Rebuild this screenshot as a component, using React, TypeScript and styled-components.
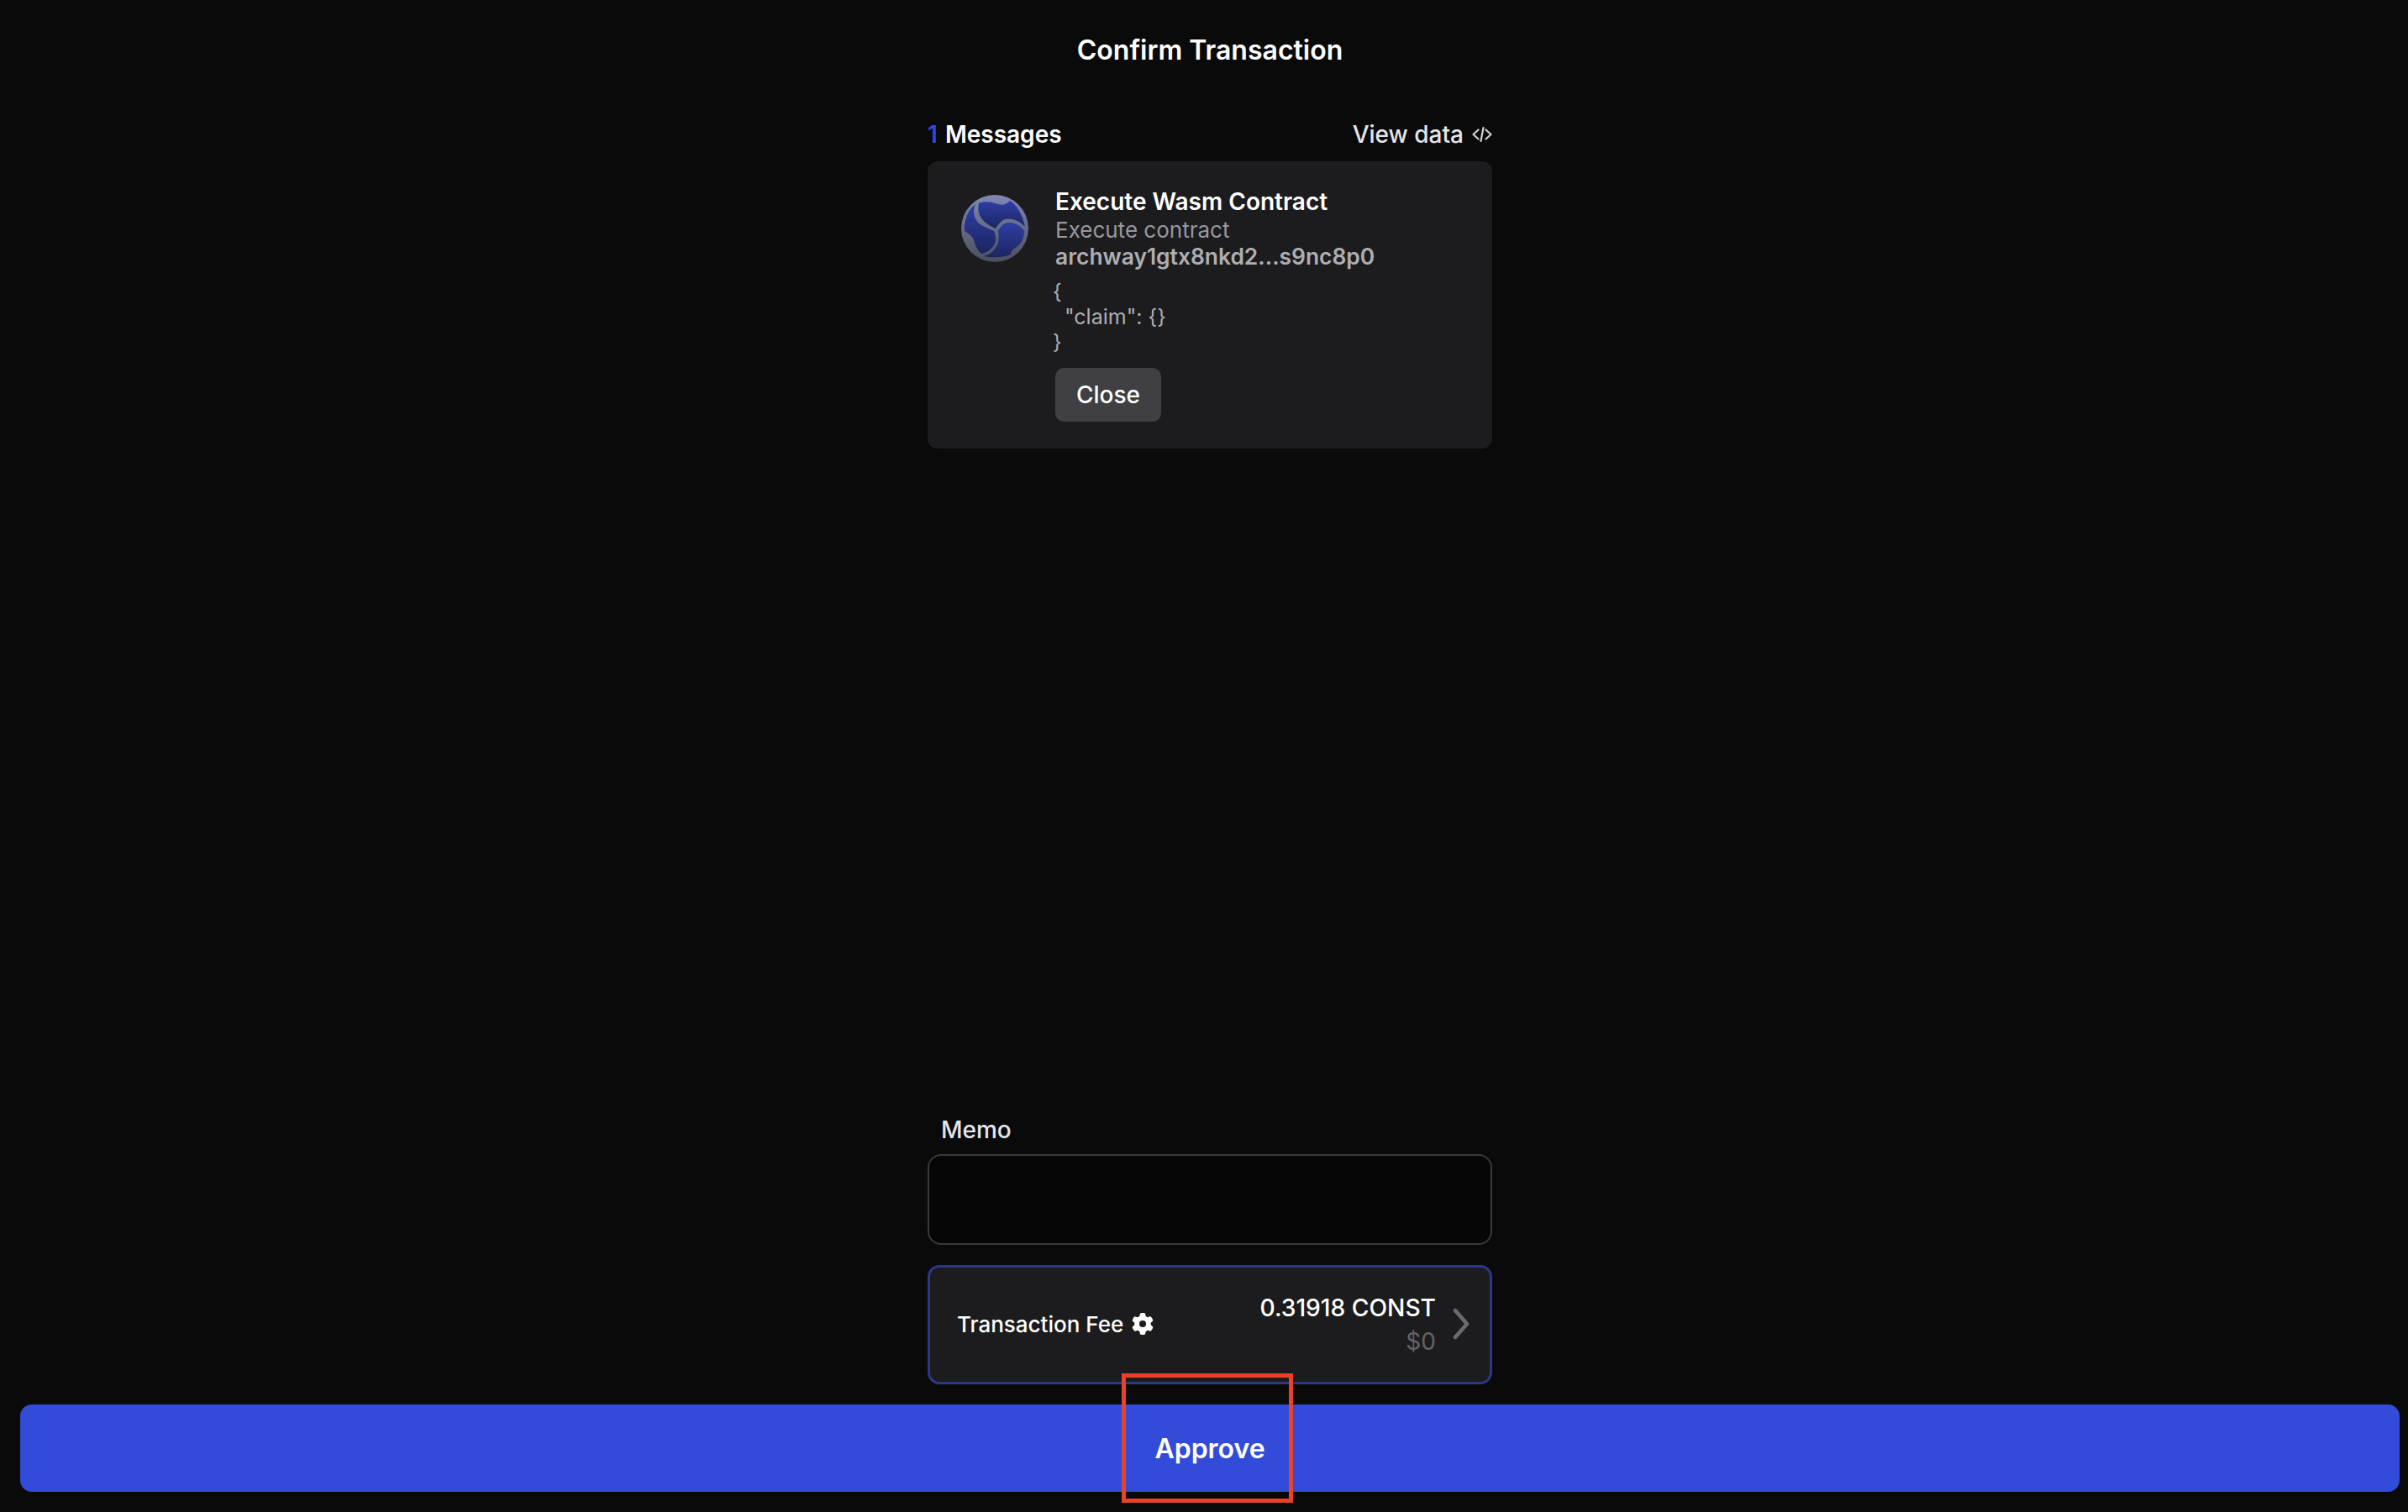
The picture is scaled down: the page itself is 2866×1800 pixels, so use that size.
import styled, { createGlobalStyle } from 'styled-components'
import { FaGear } from 'react-icons/fa6'

const GlobalStyle = createGlobalStyle`
  html, body {
    margin: 0;
    padding: 0;
    background: #0a0a0b;
    font-family: Inter, "Liberation Sans", sans-serif;
  }
`

export default function App() {
  return (
    <Page>
      <GlobalStyle />
      <Title>Confirm Transaction</Title>
      <Column>
        <MessagesHeader>
          <MessagesCount>
            <Count>1</Count> Messages
          </MessagesCount>
          <ViewData>
            View data
            <svg width="24" height="20" viewBox="0 0 24 20" fill="none" stroke="#d1d1d6" strokeWidth="2.2" strokeLinecap="round" strokeLinejoin="round">
              <path d="M7.5 4.5 1.5 10l6 5.5" />
              <path d="M13.5 2 10.5 18" />
              <path d="M16.5 4.5 22.5 10l-6 5.5" />
            </svg>
          </ViewData>
        </MessagesHeader>
        <MessageCard>
          <WasmLogo />
          <MessageBody>
            <MessageTitle>Execute Wasm Contract</MessageTitle>
            <MessageText>Execute contract</MessageText>
            <ContractAddress>archway1gtx8nkd2...s9nc8p0</ContractAddress>
            <CodeBlock>{'{\n  "claim": {}\n}'}</CodeBlock>
            <CloseButton>Close</CloseButton>
          </MessageBody>
        </MessageCard>
      </Column>
      <Spacer />
      <Column>
        <MemoLabel>Memo</MemoLabel>
        <MemoInput />
        <FeeCard>
          <FeeLabel>
            Transaction Fee
            <FaGear size={26} color="#ffffff" />
          </FeeLabel>
          <FeeRight>
            <FeeValues>
              <FeeAmount>0.31918 CONST</FeeAmount>
              <FeeFiat>$0</FeeFiat>
            </FeeValues>
            <ChevronIcon width="20" height="38" viewBox="0 0 20 38" fill="none" stroke="#6c6c70" strokeWidth="4.5" strokeLinecap="round" strokeLinejoin="round">
              <path d="M3 3 17 19 3 35" />
            </ChevronIcon>
          </FeeRight>
        </FeeCard>
      </Column>
      <ApproveButton>Approve</ApproveButton>
      <Highlight />
    </Page>
  )
}

function WasmLogo() {
  return (
    <LogoSvg width="80" height="80" viewBox="0 0 80 80">
      <defs>
        <linearGradient id="rim" x1="0" y1="0" x2="0" y2="1">
          <stop offset="0" stopColor="#7e88b4" />
          <stop offset="1" stopColor="#4c4e5c" />
        </linearGradient>
        <linearGradient id="lobe" x1="0" y1="0" x2="0" y2="1">
          <stop offset="0" stopColor="#2f3ea6" />
          <stop offset="1" stopColor="#1c2560" />
        </linearGradient>
      </defs>
      <circle cx="40" cy="40" r="40" fill="url(#rim)" />
      <g fill="url(#lobe)">
        <path d="M21 10C27 7 36 8 44 11C50 13 54 11 58 7C66 11 73 24 76 38C70 31 60 27 52 29C47 31 44 35 41 40C34 37 27 33 23 26C20 21 20 15 21 10Z" />
        <path d="M44 43C47 37 51 33 57 33C65 33 71 37 75 43C75 51 72 58 66 62C61 65 59 67 59 71C49 75 36 75 26 73C33 72 39 67 43 60C45 54 45 48 44 43Z" />
        <path d="M17 11C14 18 14 26 20 33C25 38 33 40 39 43C41 48 42 53 40 58C37 64 31 69 24 70C19 66 17 60 15 54C13 48 8 46 4 43C3 30 8 18 17 11Z" />
      </g>
    </LogoSvg>
  )
}

// ----- STYLES -----

const Page = styled.div`
  position: relative;
  box-sizing: border-box;
  height: 1800px;
  padding: 41px 10px 24px 24px;
  display: flex;
  flex-direction: column;
  align-items: center;
  overflow: hidden;
  color: #ffffff;
`

const Title = styled.h1`
  margin: 0;
  font-size: 32px;
  line-height: 38px;
  font-weight: 600;
`

const Column = styled.div`
  width: 672px;
`

const MessagesHeader = styled.div`
  display: flex;
  justify-content: space-between;
  align-items: center;
  margin-top: 63px;
  height: 36px;
  margin-bottom: 14px;
`

const MessagesCount = styled.div`
  font-size: 28px;
  font-weight: 600;
`

const Count = styled.span`
  color: #3449d8;
  margin-right: 2px;
`

const ViewData = styled.div`
  display: flex;
  align-items: center;
  gap: 10px;
  font-size: 28px;
  font-weight: 500;
  color: #e5e5ea;
`

const MessageCard = styled.div`
  box-sizing: border-box;
  height: 342px;
  padding: 30px 40px 0;
  display: flex;
  gap: 32px;
  background: #1c1c1e;
  border-radius: 12px;
`

const LogoSvg = styled.svg`
  flex: none;
  margin-top: 10px;
`

const MessageBody = styled.div`
  display: flex;
  flex-direction: column;
  align-items: flex-start;
`

const MessageTitle = styled.div`
  font-size: 28px;
  line-height: 36px;
  font-weight: 600;
`

const MessageText = styled.div`
  font-size: 26px;
  line-height: 32px;
  color: #98989e;
`

const ContractAddress = styled.div`
  font-size: 26.4px;
  line-height: 30px;
  font-weight: 600;
  color: #aeaeb2;
`

const CodeBlock = styled.pre`
  margin: 12px 0 0 -3px;
  font-family: Inter, "Liberation Sans", sans-serif;
  font-size: 25px;
  line-height: 30px;
  color: #aeaeb2;
`

const CloseButton = styled.button`
  margin-top: 16px;
  width: 126px;
  height: 64px;
  padding: 0;
  border: none;
  border-radius: 10px;
  background: #3f3f44;
  color: #ffffff;
  font-family: inherit;
  font-size: 28px;
  font-weight: 500;
`

const Spacer = styled.div`
  flex: 1;
`

const MemoLabel = styled.div`
  padding-left: 16px;
  font-size: 28px;
  line-height: 34px;
  font-weight: 500;
  color: #e5e5ea;
  margin-bottom: 12px;
`

const MemoInput = styled.div`
  box-sizing: border-box;
  height: 108px;
  border: 2px solid #3a3a3c;
  border-radius: 16px;
  background: #060607;
`

const FeeCard = styled.div`
  box-sizing: border-box;
  height: 142px;
  margin-top: 24px;
  padding: 0 24px 0 32px;
  display: flex;
  justify-content: space-between;
  align-items: center;
  background: #1c1c1e;
  border: 3px solid #2b3788;
  border-radius: 14px;
`

const FeeLabel = styled.div`
  display: flex;
  align-items: center;
  gap: 10px;
  font-size: 26px;
  font-weight: 500;
  margin-top: -2px;
`

const FeeRight = styled.div`
  display: flex;
  align-items: center;
  gap: 20px;
`

const FeeValues = styled.div`
  text-align: right;
`

const FeeAmount = styled.div`
  font-size: 28.2px;
  line-height: 40px;
  font-weight: 500;
`

const FeeFiat = styled.div`
  font-size: 28px;
  line-height: 40px;
  color: #636366;
`

const ChevronIcon = styled.svg`
  margin-top: -3px;
`

const ApproveButton = styled.button`
  flex: none;
  align-self: stretch;
  margin-top: 24px;
  height: 104px;
  padding: 0;
  border: none;
  border-radius: 14px;
  background: #324bd9;
  color: #ffffff;
  font-family: inherit;
  font-size: 32px;
  font-weight: 600;
`

const Highlight = styled.div`
  position: absolute;
  left: 1335px;
  top: 1635px;
  box-sizing: border-box;
  width: 204px;
  height: 154px;
  border: 5px solid #e8432a;
`
